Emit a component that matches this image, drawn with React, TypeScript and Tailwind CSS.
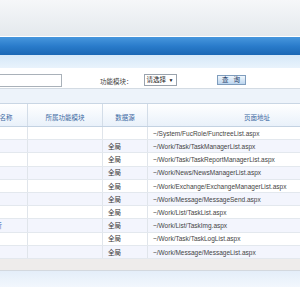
const rows = [
  { name: '', module: '', source: '', url: '~/System/FucRole/FunctreeList.aspx' },
  { name: '', module: '', source: '全局', url: '~/Work/Task/TaskManagerList.aspx' },
  { name: '', module: '', source: '全局', url: '~/Work/Task/TaskReportManagerList.aspx' },
  { name: '', module: '', source: '全局', url: '~/Work/News/NewsManagerList.aspx' },
  { name: '', module: '', source: '全局', url: '~/Work/Exchange/ExchangeManagerList.aspx' },
  { name: '', module: '', source: '全局', url: '~/Work/Message/MessageSend.aspx' },
  { name: '', module: '', source: '全局', url: '~/Work/List/TaskList.aspx' },
  { name: '任务分析', module: '', source: '全局', url: '~/Work/List/TaskImg.aspx' },
  { name: '', module: '', source: '全局', url: '~/Work/Task/TaskLogList.aspx' },
  { name: '', module: '', source: '全局', url: '~/Work/Message/MessageList.aspx' },
];

const cjk = "font-['Liberation_Sans','Noto_Sans_CJK_SC',sans-serif]";

const App = () => {
  return (
    <div className={`w-[300px] h-[300px] overflow-hidden bg-white text-[6.5px] leading-none ${cjk}`}>
      {/* top header */}
      <div className="h-[37px] bg-gradient-to-b from-[#f6f7f9] to-[#e4e9ed] border-b border-white" />
      <div className="h-[18px] bg-gradient-to-b from-[#4797dd] via-[#2a7ccb] to-[#1a67b4]" />
      <div className="h-[13px] bg-gradient-to-b from-[#d5e8f8] to-[#e9f3fc]" />

      {/* search bar */}
      <div className="h-[21px] flex items-start pt-[6px] border-b border-[#d3dbe3]">
        <div className="-ml-[10px] w-[72px] h-[13px] border border-[#a9b1b9] bg-white shrink-0" />
        <span className="ml-[38px] mt-[5px] text-[#444] shrink-0">功能模块：</span>
        <div className="ml-[11px] w-[33px] h-[12px] border border-[#9aa3ad] bg-white flex items-center px-[2px] text-[#222] shrink-0">
          <span>请选择</span>
          <span className="ml-auto text-[5px]">▼</span>
        </div>
        <button className="ml-[40px] mt-px w-[29px] h-[10px] border border-[#7f9dbd] bg-gradient-to-b from-[#f1f7fd] to-[#bcd5ee] text-[#223a66] flex items-center justify-center gap-[5px] shrink-0">
          <span>查</span>
          <span>询</span>
        </button>
      </div>
      <div className="h-[15px] bg-[#edf3fa] border-b border-[#c9d6e4]" />

      {/* table */}
      <div className="-ml-[28px] w-[394px]">
        <div className="grid grid-cols-[56px_75px_45px_218px] h-[23px] bg-gradient-to-b from-white to-[#e9f1fa] border-b border-[#c3d2e2] text-[#3d6aa3]">
          <div className="flex items-end pb-[5px] justify-center border-r border-[#d3dde8]">功能名称</div>
          <div className="flex items-end pb-[5px] justify-center border-r border-[#d3dde8]">所属功能模块</div>
          <div className="flex items-end pb-[5px] justify-center border-r border-[#d3dde8]">数据源</div>
          <div className="flex items-end pb-[5px] justify-center">页面地址</div>
        </div>
        {rows.map((r, i) => (
          <div
            key={i}
            className={`grid grid-cols-[56px_75px_45px_218px] h-[13.2px] border-b border-[#e3e8ee] ${
              i % 2 === 1 ? 'bg-[#f3f5fd]' : 'bg-white'
            }`}
          >
            <div className="flex items-center pt-[2px] pl-[4px] text-[#3366bb] border-r border-[#e0e5eb] whitespace-nowrap overflow-hidden">
              {r.name}
            </div>
            <div className="flex items-center border-r border-[#e0e5eb]">{r.module}</div>
            <div className="flex items-center pt-[2px] pl-[5px] text-[#333] border-r border-[#e0e5eb]">{r.source}</div>
            <div className="flex items-center pt-[2px] pl-[5px] text-[#444] whitespace-nowrap">{r.url}</div>
          </div>
        ))}
      </div>

      {/* footer */}
      <div className="h-[12px] bg-[#eeeceb] border-b border-[#d3d8de]" />
      <div className="h-[16px] bg-gradient-to-b from-[#e4eef9] to-[#f2f7fd]" />
    </div>
  );
};

export default App;
